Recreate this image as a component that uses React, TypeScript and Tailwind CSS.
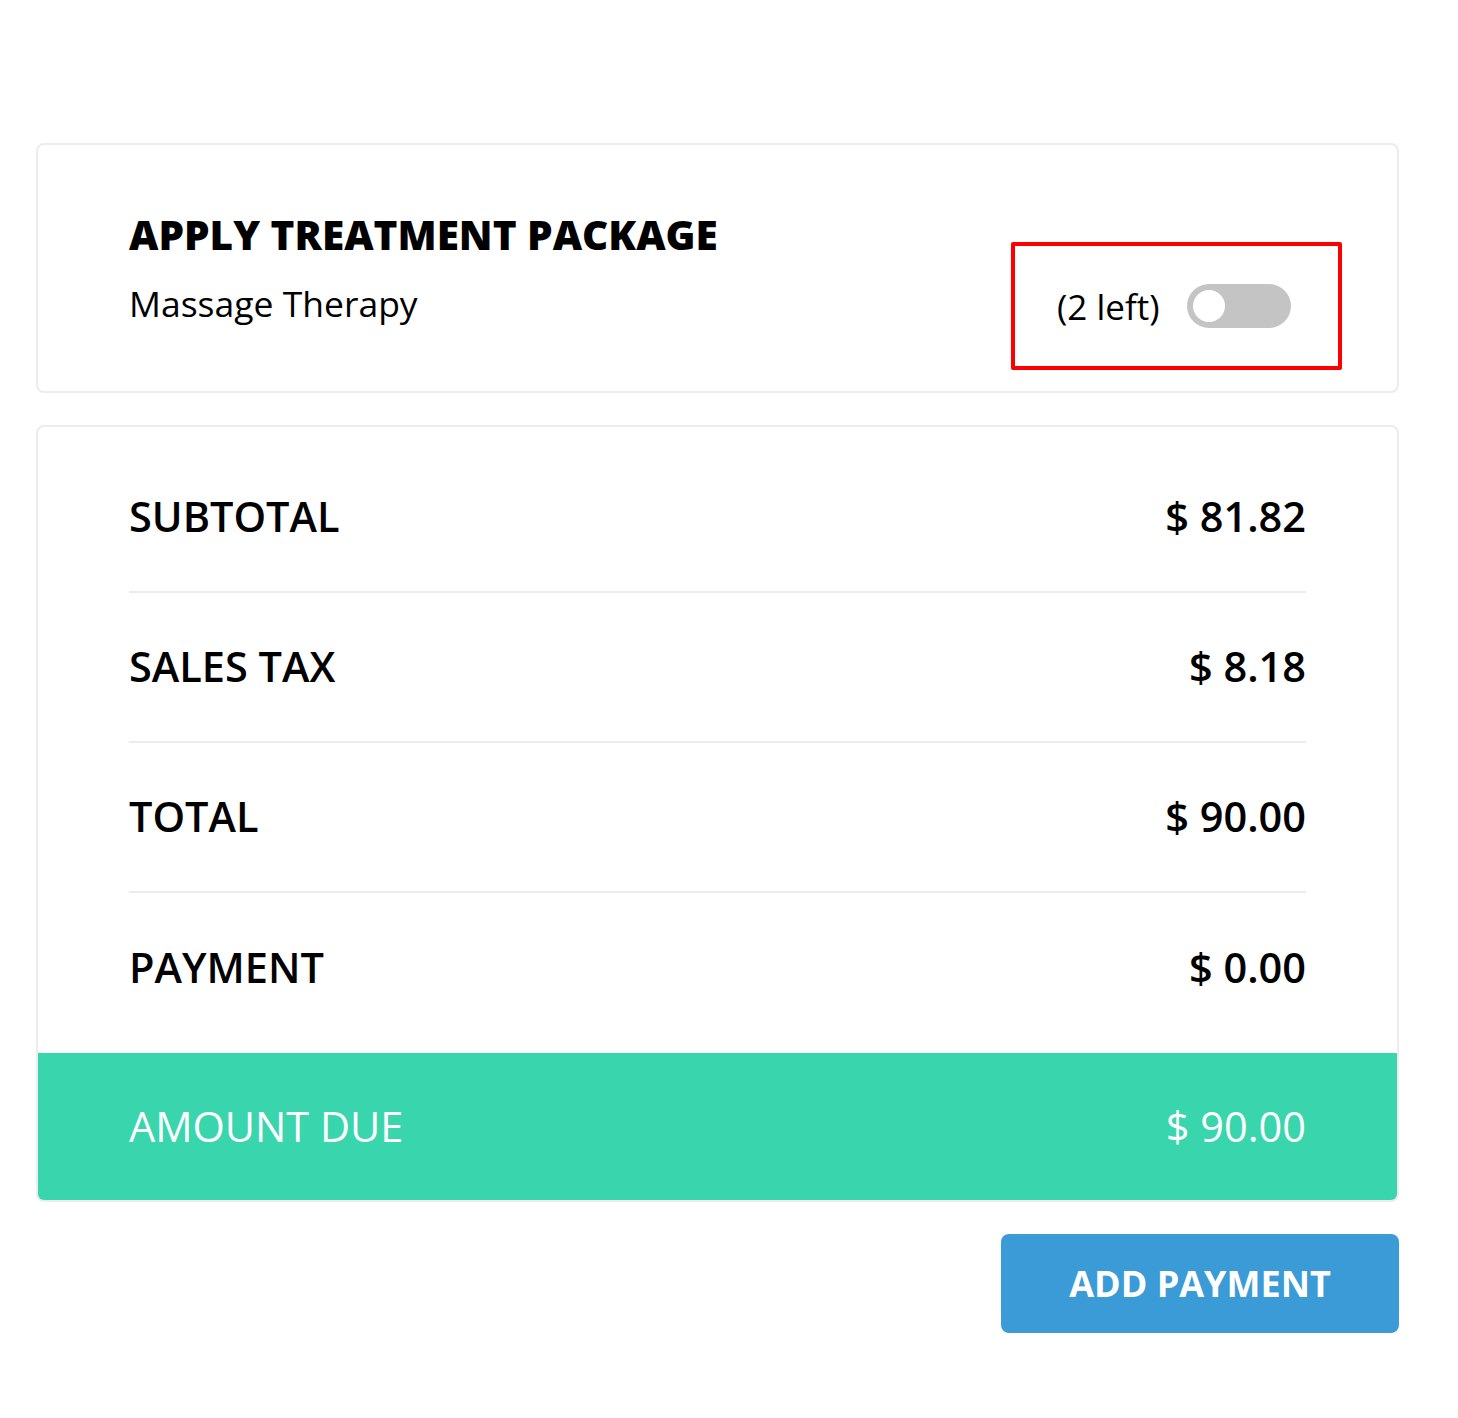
import { useState } from "react";

const rows = [
  { label: "SUBTOTAL", value: "$ 81.82" },
  { label: "SALES TAX", value: "$ 8.18" },
  { label: "TOTAL", value: "$ 90.00" },
  { label: "PAYMENT", value: "$ 0.00" },
];

export default function App() {
  const [usePackage, setUsePackage] = useState(false);

  return (
    <div className="min-h-[1418px] bg-white pt-[143px] pl-[36px] pr-[58px] font-['Open_Sans',sans-serif] text-black">
      <div className="w-[1363px]">
        {/* package card */}
        <div className="flex h-[250px] items-center justify-between rounded-[8px] border-2 border-[#ececec] pl-[91px] pr-[55px]">
          <div className="flex flex-col">
            <h2 className="text-[40.5px] font-extrabold leading-none">APPLY TREATMENT PACKAGE</h2>
            <p className="mt-[30px] text-[35.5px] leading-none">Massage Therapy</p>
          </div>
          <div className="mb-[21px] flex h-[128px] w-[331px] items-center self-end rounded-[2px] border-[4px] border-[#ff0000] pl-[42px]">
            <span className="text-[35px] leading-none">(2 left)</span>
            <button
              onClick={() => setUsePackage(!usePackage)}
              className={`ml-[27px] flex h-[44px] w-[104px] items-center rounded-full px-[6px] ${usePackage ? "justify-end bg-[#38d6ac]" : "justify-start bg-[#c4c4c4]"}`}
            >
              <span className="block h-[32px] w-[32px] rounded-full bg-white" />
            </button>
          </div>
        </div>

        {/* totals card */}
        <div className="mt-[32px] rounded-[8px] border-2 border-[#ececec] pt-[16px]">
          <div className="px-[91px]">
            {rows.map((r, i) => (
              <div
                key={r.label}
                className={`flex h-[150px] items-center justify-between text-[41.5px] font-semibold leading-none ${i < rows.length - 1 ? "border-b-2 border-[#ececec]" : ""}`}
              >
                <span>{r.label}</span>
                <span>{r.value}</span>
              </div>
            ))}
          </div>
          <div className="mt-[10px] flex h-[147px] items-center justify-between rounded-b-[6px] bg-[#39d6ad] px-[91px] text-[41.5px] leading-none text-white">
            <span>AMOUNT DUE</span>
            <span>$ 90.00</span>
          </div>
        </div>

        <div className="mt-[32px] flex justify-end">
          <button className="flex h-[99px] w-[398px] items-center justify-center rounded-[8px] bg-[#3a9bd6] text-[36px] font-bold text-white">
            ADD PAYMENT
          </button>
        </div>
      </div>
    </div>
  );
}
